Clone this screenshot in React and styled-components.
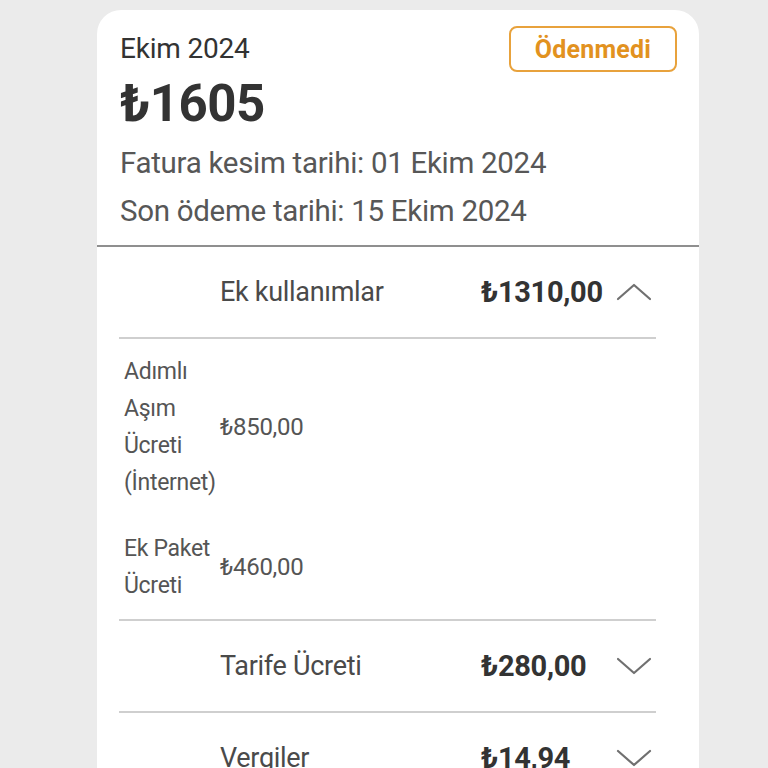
import styled, { createGlobalStyle } from "styled-components";

const GlobalStyle = createGlobalStyle`
  html, body {
    margin: 0;
    padding: 0;
    background: #ebebeb;
    font-family: Roboto, "DejaVu Sans", sans-serif;
  }
`;

const summary = [
  {
    title: "Ek kullanımlar",
    amount: "₺1310,00",
    open: true,
    items: [
      { label: "Adımlı Aşım Ücreti (İnternet)", value: "₺850,00" },
      { label: "Ek Paket Ücreti", value: "₺460,00" },
    ],
  },
  { title: "Tarife Ücreti", amount: "₺280,00", open: false, items: [] },
  { title: "Vergiler", amount: "₺14,94", open: false, items: [] },
];

function Chevron({ up }) {
  return (
    <svg width="36" height="20" viewBox="0 0 36 20" fill="none">
      <polyline
        points={up ? "2,17 18,3 34,17" : "2,3 18,17 34,3"}
        stroke="#707070"
        strokeWidth="2.2"
        strokeLinecap="round"
        strokeLinejoin="round"
      />
    </svg>
  );
}

export default function App() {
  return (
    <>
      <GlobalStyle />
      <Page>
        <Card>
          <Header>
            <TopRow>
              <Period>Ekim 2024</Period>
              <Badge>Ödenmedi</Badge>
            </TopRow>
            <Total>₺1605</Total>
            <Dates>
              <DateLine>Fatura kesim tarihi: 01 Ekim 2024</DateLine>
              <DateLine>Son ödeme tarihi: 15 Ekim 2024</DateLine>
            </Dates>
          </Header>
          <Breakdown>
            {summary.map((group) => (
              <Group key={group.title}>
                <GroupRow $open={group.open}>
                  <span />
                  <GroupTitle>{group.title}</GroupTitle>
                  <GroupAmount>{group.amount}</GroupAmount>
                  <ChevronCell>
                    <Chevron up={group.open} />
                  </ChevronCell>
                </GroupRow>
                {group.open &&
                  group.items.map((item) => (
                    <ItemRow key={item.label}>
                      <ItemLabel>{item.label}</ItemLabel>
                      <ItemValue>{item.value}</ItemValue>
                    </ItemRow>
                  ))}
              </Group>
            ))}
          </Breakdown>
        </Card>
      </Page>
    </>
  );
}

const Page = styled.div`
  padding: 10px 0 0 97px;
  height: 758px;
  overflow: hidden;
`;

const Card = styled.div`
  width: 602px;
  background: #ffffff;
  border-radius: 24px 24px 0 0;
  min-height: 800px;
`;

const Header = styled.div`
  padding: 16px 22px 10px 23px;
  border-bottom: 2px solid #8f8f8f;
`;

const TopRow = styled.div`
  display: flex;
  justify-content: space-between;
  align-items: flex-start;
`;

const Period = styled.div`
  margin-top: 7px;
  font-size: 28px;
  line-height: 32px;
  color: #333333;
  letter-spacing: -0.2px;
`;

const Badge = styled.div`
  width: 168px;
  height: 46px;
  box-sizing: border-box;
  border: 2px solid #e8a23c;
  border-radius: 8px;
  display: flex;
  align-items: center;
  justify-content: center;
  font-size: 25px;
  font-weight: 700;
  color: #e2921f;
  letter-spacing: 0.2px;
`;

const Total = styled.div`
  margin-top: 2px;
  font-size: 51px;
  line-height: 60px;
  font-weight: 700;
  color: #333333;
  letter-spacing: -0.5px;
`;

const Dates = styled.div`
  margin-top: 5px;
`;

const DateLine = styled.div`
  font-size: 29.5px;
  line-height: 48px;
  color: #575757;
  letter-spacing: -0.3px;
`;

const Breakdown = styled.div`
  padding: 0 43px 0 22px;
`;

const Group = styled.div`
  border-bottom: 2px solid #cfcfcf;
`;

const GroupRow = styled.div`
  display: grid;
  grid-template-columns: 101px 261px 133px 1fr;
  align-items: center;
  height: 90px;
  border-bottom: ${(p) => (p.$open ? "2px solid #cfcfcf" : "none")};
`;

const GroupTitle = styled.div`
  font-size: 27px;
  color: #4a4a4a;
  letter-spacing: -0.3px;
`;

const GroupAmount = styled.div`
  font-size: 29px;
  font-weight: 700;
  color: #333333;
  letter-spacing: -0.3px;
`;

const ChevronCell = styled.div`
  display: flex;
  justify-content: flex-end;
  padding-right: 4px;
`;

const ItemRow = styled.div`
  display: grid;
  grid-template-columns: 101px 1fr;
  align-items: center;
  padding: 14px 0 15px;
`;

const ItemLabel = styled.div`
  padding-left: 5px;
  font-size: 23px;
  line-height: 37px;
  color: #555555;
  letter-spacing: -0.3px;
`;

const ItemValue = styled.div`
  font-size: 24px;
  color: #555555;
  letter-spacing: -0.3px;
`;
